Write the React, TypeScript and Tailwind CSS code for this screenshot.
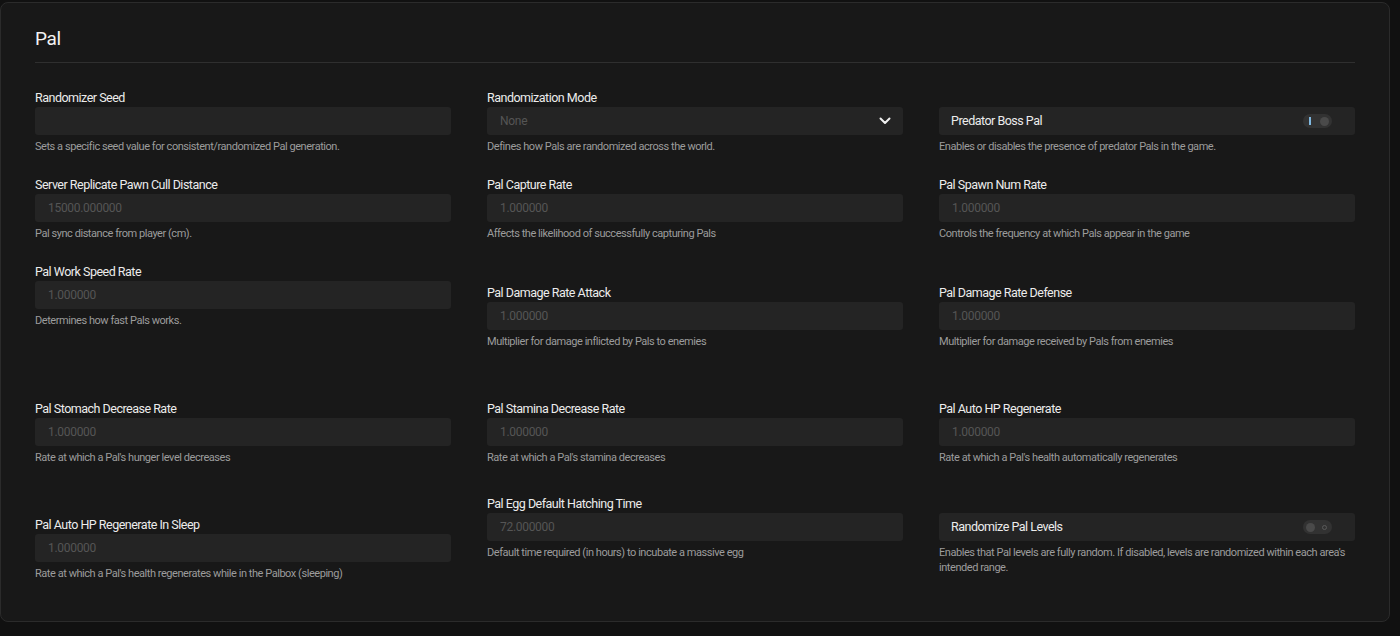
type Field =
  | { kind: "input"; label: string; value: string; desc: string; offset?: boolean }
  | { kind: "select"; label: string; value: string; desc: string; offset?: boolean }
  | { kind: "toggle"; label: string; on: boolean; desc: string; offset?: boolean };

const ROWS: { mt: string; cells: Field[] }[] = [
  {
    mt: "mt-[26px]",
    cells: [
      { kind: "input", label: "Randomizer Seed", value: "", desc: "Sets a specific seed value for consistent/randomized Pal generation." },
      { kind: "select", label: "Randomization Mode", value: "None", desc: "Defines how Pals are randomized across the world." },
      { kind: "toggle", label: "Predator Boss Pal", on: true, desc: "Enables or disables the presence of predator Pals in the game." },
    ],
  },
  {
    mt: "mt-[22px]",
    cells: [
      { kind: "input", label: "Server Replicate Pawn Cull Distance", value: "15000.000000", desc: "Pal sync distance from player (cm)." },
      { kind: "input", label: "Pal Capture Rate", value: "1.000000", desc: "Affects the likelihood of successfully capturing Pals" },
      { kind: "input", label: "Pal Spawn Num Rate", value: "1.000000", desc: "Controls the frequency at which Pals appear in the game" },
    ],
  },
  {
    mt: "mt-[22px]",
    cells: [
      { kind: "input", label: "Pal Work Speed Rate", value: "1.000000", desc: "Determines how fast Pals works." },
      { kind: "input", label: "Pal Damage Rate Attack", value: "1.000000", desc: "Multiplier for damage inflicted by Pals to enemies", offset: true },
      { kind: "input", label: "Pal Damage Rate Defense", value: "1.000000", desc: "Multiplier for damage received by Pals from enemies", offset: true },
    ],
  },
  {
    mt: "mt-[51px]",
    cells: [
      { kind: "input", label: "Pal Stomach Decrease Rate", value: "1.000000", desc: "Rate at which a Pal's hunger level decreases" },
      { kind: "input", label: "Pal Stamina Decrease Rate", value: "1.000000", desc: "Rate at which a Pal's stamina decreases" },
      { kind: "input", label: "Pal Auto HP Regenerate", value: "1.000000", desc: "Rate at which a Pal's health automatically regenerates" },
    ],
  },
  {
    mt: "mt-[30px]",
    cells: [
      { kind: "input", label: "Pal Auto HP Regenerate In Sleep", value: "1.000000", desc: "Rate at which a Pal's health regenerates while in the Palbox (sleeping)", offset: true },
      { kind: "input", label: "Pal Egg Default Hatching Time", value: "72.000000", desc: "Default time required (in hours) to incubate a massive egg" },
      { kind: "toggle", label: "Randomize Pal Levels", on: false, desc: "Enables that Pal levels are fully random. If disabled, levels are randomized within each area's intended range." },
    ],
  },
];

function Switch({ on }: { on: boolean }) {
  return (
    <div className="flex h-[14px] w-[29px] items-center rounded-full bg-[#323232] px-[3px]">
      {on ? (
        <>
          <span className="ml-[3px] h-[8px] w-[2px] bg-[#7fb8e0]" />
          <span className="ml-auto h-[9px] w-[9px] rounded-full bg-[#4a4a4a]" />
        </>
      ) : (
        <>
          <span className="h-[9px] w-[9px] rounded-full bg-[#4a4a4a]" />
          <span className="ml-auto mr-[2px] h-[5px] w-[5px] rounded-full border border-[#5a5a5a]" />
        </>
      )}
    </div>
  );
}

function Cell({ f }: { f: Field }) {
  return (
    <div className={f.offset ? "mt-[21px]" : ""}>
      <div className="h-[18px] text-[12.5px] leading-[18px] tracking-[-0.5px] text-[#ececec]">
        {f.kind === "toggle" ? "" : f.label}
      </div>
      {f.kind === "input" && (
        <div className="flex h-[28px] items-center rounded-[3px] bg-[#242424] px-[13px] text-[12px] tracking-[-0.3px] text-[#555555]">
          {f.value}
        </div>
      )}
      {f.kind === "select" && (
        <div className="flex h-[28px] items-center justify-between rounded-[3px] bg-[#242424] pl-[13px] pr-[12px] text-[12px] tracking-[-0.3px] text-[#555555]">
          <span>{f.value}</span>
          <svg width="12" height="8" viewBox="0 0 12 8" fill="none">
            <path d="M1.5 1.5 6 6l4.5-4.5" stroke="#f0f0f0" strokeWidth="2" strokeLinecap="round" strokeLinejoin="round" />
          </svg>
        </div>
      )}
      {f.kind === "toggle" && (
        <div className="flex h-[28px] items-center justify-between rounded-[3px] bg-[#242424] pl-[12px] pr-[23px] text-[12.5px] tracking-[-0.5px] text-[#ececec]">
          <span>{f.label}</span>
          <Switch on={f.on} />
        </div>
      )}
      <p className="mt-[4px] text-[11px] leading-[15px] tracking-[-0.45px] text-[#9c9c9c]">{f.desc}</p>
    </div>
  );
}

export default function App() {
  return (
    <div className="min-h-[636px] bg-[#111111] pt-[2px] font-['Roboto',sans-serif]">
      <div className="h-[620px] w-[1390px] rounded-lg border border-[#2b2b2b] bg-[#181818] px-[34px] pt-[24px]">
        <h1 className="border-b border-[#2f2f2f] pb-[11px] text-[19px] leading-6 tracking-[-0.3px] text-[#f2f2f2]">Pal</h1>
        {ROWS.map((row, i) => (
          <div key={i} className={`grid grid-cols-3 items-start gap-x-[36px] ${row.mt}`}>
            {row.cells.map((c) => (
              <Cell key={c.label} f={c} />
            ))}
          </div>
        ))}
      </div>
    </div>
  );
}
